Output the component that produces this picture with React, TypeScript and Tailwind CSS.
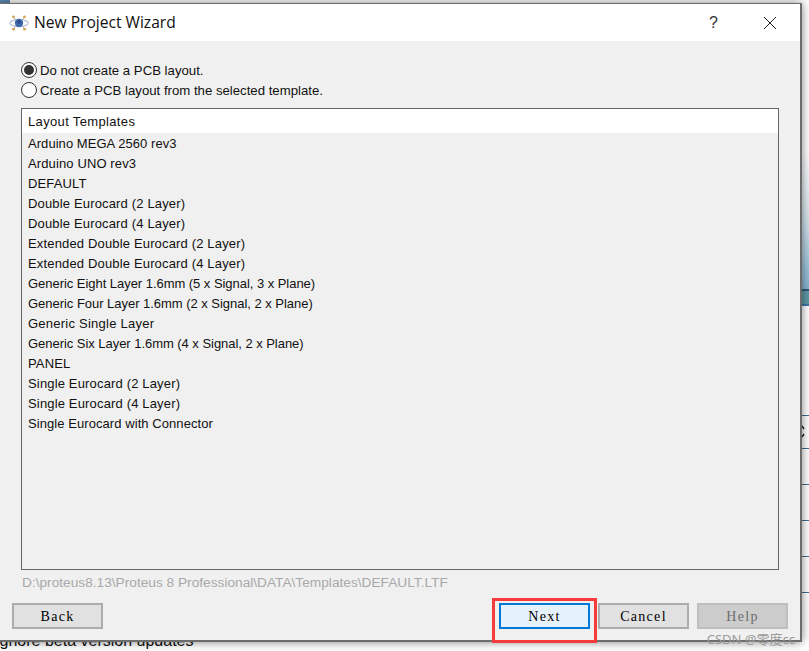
const templates = [
  { name: "Arduino MEGA 2560 rev3", fit: "tracking-[0.05px]" },
  { name: "Arduino UNO rev3", fit: "tracking-[0.12px]" },
  { name: "DEFAULT", fit: "tracking-[0.15px]" },
  { name: "Double Eurocard (2 Layer)", fit: "tracking-[0.16px]" },
  { name: "Double Eurocard (4 Layer)", fit: "tracking-[0.16px]" },
  { name: "Extended Double Eurocard (2 Layer)", fit: "tracking-[0.16px]" },
  { name: "Extended Double Eurocard (4 Layer)", fit: "tracking-[0.16px]" },
  { name: "Generic Eight Layer 1.6mm (5 x Signal, 3 x Plane)", fit: "tracking-[-0.04px]" },
  { name: "Generic Four Layer 1.6mm (2 x Signal, 2 x Plane)", fit: "tracking-[-0.03px]" },
  { name: "Generic Single Layer", fit: "tracking-[0.24px]" },
  { name: "Generic Six Layer 1.6mm (4 x Signal, 2 x Plane)", fit: "tracking-[-0.04px]" },
  { name: "PANEL", fit: "tracking-[0.15px]" },
  { name: "Single Eurocard (2 Layer)", fit: "tracking-[0.16px]" },
  { name: "Single Eurocard (4 Layer)", fit: "tracking-[0.16px]" },
  { name: "Single Eurocard with Connector", fit: "tracking-[0.07px]" },
];

function AppIcon() {
  return (
    <svg width="20" height="16" viewBox="0 0 20 16" fill="none">
      <ellipse cx="10" cy="8" rx="9.2" ry="3.4" stroke="#b8c2ce" strokeWidth="1.2" />
      <line x1="4" y1="2" x2="16" y2="14" stroke="#a4acb4" strokeWidth="1" />
      <line x1="16" y1="2" x2="4" y2="14" stroke="#a4acb4" strokeWidth="1" />
      <circle cx="10" cy="8" r="4.2" fill="#3f68ad" />
      <circle cx="10" cy="7" r="1.8" fill="#2b4682" />
      <circle cx="4.5" cy="1.8" r="1.4" fill="#d9a050" />
      <circle cx="15.5" cy="1.8" r="1.4" fill="#d9a050" />
      <circle cx="4.5" cy="14.2" r="1.4" fill="#d9a050" />
      <circle cx="15.5" cy="14.2" r="1.4" fill="#d9a050" />
    </svg>
  );
}

function Radio({ checked, label }: { checked?: boolean; label: string }) {
  return (
    <div className="flex h-5 items-center gap-[3px]">
      <span className="flex h-4 w-4 items-center justify-center rounded-full border border-[#333] bg-white">
        {checked && <span className="h-[10px] w-[10px] rounded-full bg-[#333]" />}
      </span>
      <span className="pt-px text-[13.2px] text-[#111]">{label}</span>
    </div>
  );
}

function WizardButton({ label, className }: { label: string; className: string }) {
  return (
    <button
      className={
        "h-[26px] w-[91px] border-2 pt-px font-['Liberation_Serif',serif] text-[14px] leading-none tracking-[1.3px] " + className
      }
    >
      {label}
    </button>
  );
}

export default function App() {
  return (
    <div className="relative h-[651px] w-[809px] overflow-hidden bg-white font-['Liberation_Sans',Arial,sans-serif]">
      {/* desktop behind the dialog */}
      <div className="absolute left-0 top-0 h-[3px] w-[10px] bg-[#5b87b0]" />
      <div className="absolute right-0 top-[150px] h-[139px] w-[8px] bg-gradient-to-b from-white via-[#d3e3ec] to-[#86b3d0]" />
      <div className="absolute right-0 top-[289px] h-[2px] w-[8px] bg-[#2f5878]" />
      <div className="absolute right-0 top-[291px] h-[13px] w-[8px] bg-[#5d9aa6]" />
      <div className="absolute right-0 top-[304px] h-[2px] w-[8px] bg-[#3f74a8]" />
      <div className="absolute right-0 top-[415px] h-px w-[8px] bg-[#3f6f96]" />
      <svg className="absolute left-[802px] top-[425px]" width="4" height="13" viewBox="0 0 4 13" fill="none" stroke="#123" strokeWidth="1.5">
        <path d="M0 1 L2 4 M2 9 L0 12" />
      </svg>
      <div className="absolute right-0 top-[448px] h-px w-[8px] bg-[#3f6f96]" />
      <div className="absolute right-0 top-[484px] h-px w-[8px] bg-[#3f6f96]" />
      <div className="absolute right-0 top-[520px] h-px w-[8px] bg-[#3f6f96]" />
      <div className="absolute right-0 top-[556px] h-px w-[8px] bg-[#3f6f96]" />
      <div className="absolute right-0 top-[592px] h-px w-[8px] bg-[#3f6f96]" />
      <div className="absolute left-[-4px] top-[633px] text-[16px] leading-[16px] text-[#111]">ignore beta version updates</div>

      <div className="absolute left-0 top-[3px] flex h-[639px] w-[802px] flex-col border-b-2 border-r-2 border-t border-[#6d6d6d] bg-[#f0f0f0] shadow-[0_0_9px_rgba(0,0,0,0.5)]">
        <div className="flex h-[37px] shrink-0 items-center bg-white pl-[9px]">
          <AppIcon />
          <span className="ml-[5px] font-['Open_Sans',sans-serif] text-[15.6px] text-[#111]">New Project Wizard</span>
          <span className="ml-auto mr-[45px] text-[16px] text-[#333]">?</span>
          <svg className="mr-[23px]" width="14" height="14" viewBox="0 0 14 14" stroke="#222" strokeWidth="1">
            <line x1="1" y1="1" x2="13" y2="13" />
            <line x1="13" y1="1" x2="1" y2="13" />
          </svg>
        </div>

        <div className="flex min-h-0 flex-1 flex-col px-[12px] pt-[19px]">
          <div className="pl-[9px]">
            <Radio checked label="Do not create a PCB layout." />
            <Radio label="Create a PCB layout from the selected template." />
          </div>
          <div className="ml-[9px] mr-[9px] mt-[8px] flex h-[462px] flex-col border border-[#666] bg-[#f0f0f0]">
            <div className="flex h-[24px] shrink-0 items-center bg-white pl-[6px] pt-px text-[13px] tracking-[0.35px] text-[#111]">Layout Templates</div>
            {templates.map((row) => (
              <div key={row.name} className={"flex h-5 shrink-0 items-center pl-[6px] pt-px text-[13px] text-[#111] " + row.fit}>
                {row.name}
              </div>
            ))}
          </div>
          <div className="ml-[10px] mt-[5px] text-[13.7px] leading-[16px] text-[#a9a9a9]">
            D:\proteus8.13\Proteus 8 Professional\DATA\Templates\DEFAULT.LTF
          </div>
          <div className="mt-[12px] flex items-center">
            <WizardButton label="Back" className="border-[#adadad] bg-[#e1e1e1] text-black" />
            <div className="relative ml-auto mr-[8px]">
              <WizardButton label="Next" className="border-[#0078d7] bg-[#e5f1fb] text-black" />
              <div className="absolute -inset-x-[7px] -bottom-[14px] -top-[5px] border-[3px] border-[#f73a3a]" />
            </div>
            <WizardButton label="Cancel" className="mr-[8px] border-[#adadad] bg-[#e1e1e1] text-black" />
            <WizardButton label="Help" className="border-[#bfbfbf] bg-[#cccccc] text-[#6d6d6d]" />
          </div>
        </div>
      </div>

      <div className="absolute bottom-[4px] right-[14px] font-['Noto_Sans','Noto_Sans_CJK_SC',sans-serif] text-[13px] leading-[16px] text-[#9a9a9a]">
        CSDN @零度cc
      </div>
    </div>
  );
}
